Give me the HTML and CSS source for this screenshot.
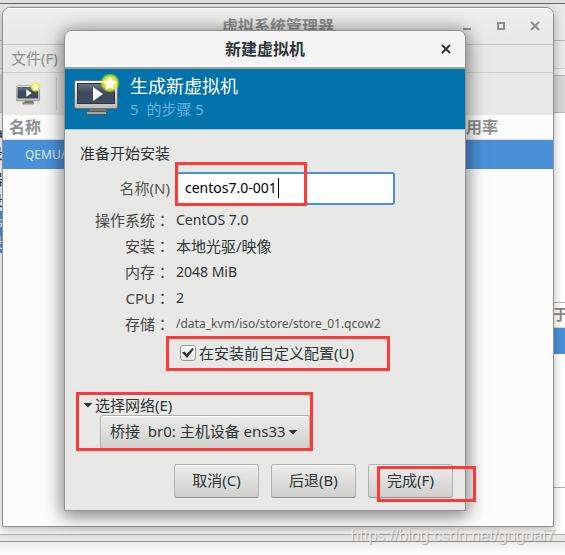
FILE: index.html
```html
<!DOCTYPE html>
<html lang="zh-CN">
  <head>
    <meta charset="UTF-8" />
    <title>新建虚拟机</title>
    <link rel="stylesheet" href="styles.css">
  </head>
  <body>
    <svg width="0" height="0" class="defs">
      <defs>
        <linearGradient id="screen" x1="0" y1="0" x2="0" y2="1">
          <stop offset="0" stop-color="#6b7785" />
          <stop offset="0.45" stop-color="#3d4a5b" />
          <stop offset="1" stop-color="#434f60" />
        </linearGradient>
        <linearGradient id="frame" x1="0" y1="0" x2="0" y2="1">
          <stop offset="0" stop-color="#f4f4f2" />
          <stop offset="1" stop-color="#bdbdb9" />
        </linearGradient>
        <radialGradient id="glow">
          <stop offset="0.5" stop-color="#eef02a" />
          <stop offset="0.75" stop-color="#e6ee20" stop-opacity="0.75" />
          <stop offset="1" stop-color="#e6ee20" stop-opacity="0" />
        </radialGradient>
        <symbol id="vm" viewBox="0 0 48 44">
          <path d="M17 34h14l2 4h-18z" fill="#777773" />
          <rect x="12.500" y="37.500" width="20" height="3" rx="1" fill="#a5a5a1" stroke="#555753" />
          <rect x="0.500" y="6.500" width="43" height="28" rx="2" fill="url(#frame)" stroke="#6f716e" />
          <rect x="3.500" y="9.500" width="37" height="20" fill="url(#screen)" stroke="#2c3642" />
          <path d="M19 13v14l10-7z" fill="#fff" />
          <circle cx="36" cy="9" r="10" fill="url(#glow)" />
          <path d="M36 2l2.200 4.600 5 .6-3.700 3.500 1 5-4.500-2.500-4.500 2.500 1-5-3.700-3.500 5-.6z" fill="#fff" />
        </symbol>
      </defs>
    </svg>

    <div class="desktop">
      <div class="backdrop">
        <div class="backdrop-title"></div>
        <div class="backdrop-menu"></div>
        <div class="backdrop-gap"></div>
        <div class="backdrop-tools"></div>
        <div class="backdrop-body">
          <div class="files">
            <span>a</span>
            <span>录</span>
            <span class="spaced">器</span>
            <span>录</span>
            <span class="selected">s</span>
            <span class="selected">录</span>
          </div>
          <div class="side">
            <div class="side-head">于</div>
            <div class="side-row"></div>
            <div class="side-rest"></div>
          </div>
        </div>
        <div class="backdrop-status"></div>
        <div class="backdrop-edge"></div>
      </div>

      <section class="window manager">
        <header class="titlebar">
          <h2>虚拟系统管理器</h2>
          <div class="controls">
            <button type="button" aria-label="最小化"><svg width="10" height="10"><path d="M1 8h8" /></svg></button>
            <button type="button" aria-label="最大化"><svg width="10" height="10"><path d="M2 2h6v6h-6z" /></svg></button>
            <button type="button" aria-label="关闭"><svg width="10" height="10"><path d="M1 1l8 8M9 1l-8 8" /></svg></button>
          </div>
        </header>
        <nav class="menubar"><button type="button">文件(F)</button></nav>
        <div class="toolbar">
          <button type="button" aria-label="新建虚拟机"><svg width="26" height="24"><use href="#vm" /></svg></button>
        </div>
        <table class="machines">
          <thead>
            <tr><th>名称</th><th class="usage">CPU 使用率</th></tr>
          </thead>
          <tbody>
            <tr><td>QEMU/KVM</td><td></td></tr>
          </tbody>
        </table>
      </section>

      <form class="window dialog">
        <header class="titlebar">
          <h1>新建虚拟机</h1>
          <div class="controls">
            <button type="button" aria-label="关闭"><svg width="10" height="10"><path d="M1 1l8 8M9 1l-8 8" /></svg></button>
          </div>
        </header>

        <div class="banner">
          <svg width="48" height="44"><use href="#vm" /></svg>
          <div>
            <h3>生成新虚拟机</h3>
            <p>5 &nbsp;的步骤 5</p>
          </div>
        </div>

        <div class="content">
          <p class="ready">准备开始安装</p>
          <div class="name-row">
            <label for="name">名称(N)</label>
            <div class="marked">
              <input type="text" id="name" value="centos7.0-001" />
              <i class="caret"></i>
              <i class="mark mark-name"></i>
            </div>
          </div>
          <dl class="summary">
            <dt>操作系统<span lang="zh-TW">：</span></dt><dd class="latin">CentOS 7.0</dd>
            <dt>安装<span lang="zh-TW">：</span></dt><dd>本地光驱/映像</dd>
            <dt>内存<span lang="zh-TW">：</span></dt><dd class="latin">2048 MiB</dd>
            <dt>CPU<span lang="zh-TW">：</span></dt><dd class="latin">2</dd>
            <dt>存储<span lang="zh-TW">：</span></dt><dd class="path">/data_kvm/iso/store/store_01.qcow2</dd>
          </dl>
          <div class="custom marked">
            <input type="checkbox" id="custom" checked />
            <label for="custom">在安装前自定义配置(U)</label>
            <i class="mark mark-custom"></i>
          </div>
          <div class="network marked">
            <button type="button" class="expander" aria-expanded="true">选择网络(E)</button>
            <div class="combo">
              <select aria-label="选择网络">
                <option>桥接 &nbsp;br0: 主机设备 ens33</option>
              </select>
            </div>
            <i class="mark mark-network"></i>
          </div>
        </div>

        <footer class="actions">
          <button type="button">取消(C)</button>
          <button type="button">后退(B)</button>
          <div class="marked">
            <button type="submit">完成(F)</button>
            <i class="mark mark-finish"></i>
          </div>
        </footer>
      </form>

      <div class="watermark">https://blog.csdn.net/guguai7</div>
    </div>
  </body>
</html>
```
FILE: styles.css
```css
* {
  box-sizing: border-box;
}
body {
  margin: 0;
  font-family: "Noto Sans", "Noto Sans CJK SC", sans-serif;
  font-size: 15px;
  color: #2e3436;
}
h1,
h2,
h3,
p,
dl,
dd {
  margin: 0;
}
button,
input,
select {
  font: inherit;
  color: inherit;
}
button {
  padding: 0;
  border: none;
  background: none;
}
.defs {
  position: absolute;
}
.desktop {
  position: relative;
  height: 100vh;
  min-height: 555px;
  overflow: hidden;
  background: #fff;
}

/* window at the back */
.backdrop {
  display: flex;
  flex-direction: column;
  height: 100%;
  border-top: 3px solid #e0e0e1;
}
.backdrop-title {
  height: 38px;
  background: #e8e8e6;
  border-top: 1px solid #666;
  border-bottom: 1px solid #b8b8b6;
}
.backdrop-menu {
  height: 28px;
  background: #e8e8e6;
  border-bottom: 1px solid #cfcfcd;
}
.backdrop-gap {
  height: 7px;
  background: #ededeb;
  border-bottom: 1px solid #b8b8b6;
}
.backdrop-tools {
  height: 37px;
  background: #d6d6d4;
  border-bottom: 1px solid #b8b8b6;
}
.backdrop-body {
  flex: 1;
  display: flex;
  justify-content: space-between;
}
.files {
  width: 3px;
  padding-top: 9px;
}
.files span {
  display: flex;
  justify-content: flex-end;
  height: 21px;
  overflow: hidden;
  line-height: 20px;
}
.files .spaced {
  margin-top: 5px;
}
.files .selected {
  background: #4a90d9;
  color: #fff;
}
.side {
  width: 12px;
  padding-top: 189px;
}
.side-head {
  display: flex;
  justify-content: flex-start;
  height: 26px;
  overflow: hidden;
  border-top: 1px solid #b0b0ae;
  border-bottom: 1px solid #ddd;
  color: #888a85;
  font-weight: bold;
  line-height: 23px;
}
.side-row {
  height: 26px;
  background: #4a90d9;
}
.side-rest {
  height: 134px;
  border-bottom: 1px solid #b0b0ae;
}
.backdrop-status {
  height: 8px;
  background: #e8e8e4;
  border-top: 1px solid #b4b4b0;
  border-bottom: 1px solid #999;
}
.backdrop-edge {
  height: 13px;
  background: linear-gradient(#ececec, #fff);
}

.window {
  position: absolute;
  border: 1px solid #919190;
  border-radius: 8px 8px 0 0;
  background: #e8e8e6;
}
.titlebar {
  display: grid;
  grid-template-columns: 1fr auto 1fr;
  align-items: center;
  height: 36px;
}
.titlebar h1,
.titlebar h2 {
  grid-column: 2;
  font-size: 16px;
  line-height: 24px;
}
.controls {
  display: flex;
  justify-content: flex-end;
  padding-right: 1px;
}
.controls button {
  display: flex;
  align-items: center;
  justify-content: center;
  width: 34px;
  height: 24px;
}
.controls path {
  fill: none;
  stroke: currentColor;
  stroke-width: 2;
}

/* manager window */
.manager {
  top: 7px;
  right: 11px;
  bottom: 28px;
  left: 2px;
  overflow: hidden;
  background: #fcfcfc;
  color: #8b8e8f;
  box-shadow: 0 3px 9px 1px rgba(0, 0, 0, 0.25);
}
.manager .titlebar {
  padding-bottom: 2px;
  background: linear-gradient(#eeeeec, #e8e8e6);
  border-top: 1px solid #fff;
}
.menubar {
  height: 29px;
  padding-left: 8px;
  border-top: 1px solid #c6c6c4;
  border-bottom: 1px solid #d0d0ce;
  background: #e8e8e6;
}
.menubar button {
  line-height: 26px;
}
.toolbar {
  display: flex;
  align-items: center;
  height: 42px;
  padding-left: 13px;
  background: #e8e8e6;
}
.toolbar button {
  display: flex;
  width: 41px;
  height: 34px;
  align-items: center;
  border-right: 1px solid #cfcfcd;
}
.machines {
  width: 100%;
  border-collapse: collapse;
}
.machines th {
  height: 24px;
  padding: 0 6px;
  border-bottom: 1px solid #ddd;
  font-size: 16px;
  line-height: 22px;
  text-align: left;
}
.machines .usage {
  padding-right: 55px;
  text-align: right;
}
.machines td {
  height: 30px;
  padding: 0 22px;
  background: #4a90d9;
  color: #dbe9f7;
  font-size: 12px;
}

/* new machine dialog */
.dialog {
  top: 30px;
  right: 99px;
  left: 64px;
  box-shadow: 0 3px 18px 2px rgba(0, 0, 0, 0.5);
}
.dialog .titlebar {
  height: 38px;
  padding-bottom: 1px;
  border-radius: 7px 7px 0 0;
  border-bottom: 2px solid #a3a39d;
  background: #f4f4f4;
}
.dialog .controls {
  padding-right: 2px;
}
.banner {
  display: flex;
  gap: 8px;
  height: 61px;
  padding: 5px 9px;
  border-bottom: 1px solid #a9c4d2;
  background: #0073aa;
  color: #fff;
}
.banner h3 {
  font-size: 18px;
  font-weight: normal;
  line-height: 24px;
}
.banner p {
  color: #66b3e3;
  line-height: 22px;
}
.content {
  padding: 10px 15px 0;
}
.ready {
  line-height: 26px;
}
.name-row {
  display: grid;
  grid-template-columns: 90px 1fr;
  gap: 6px;
  align-items: center;
  margin-top: 6px;
}
.name-row label {
  padding-bottom: 3px;
  color: #555;
  text-align: right;
}
.name-row input {
  display: block;
  width: 80%;
  height: 33px;
  padding: 0 7px 2px;
  border: 2px solid #4a90d9;
  border-radius: 3px;
  background: #fff;
  color: #000;
  font-size: 14px;
  outline: none;
}
.summary {
  display: grid;
  grid-template-columns: 90px 1fr;
  column-gap: 6px;
  margin-top: 2px;
  line-height: 26px;
}
.summary dt,
.summary dd {
  height: 26px;
}
.summary dt {
  color: #444;
  text-align: right;
}
.summary dt span {
  font-family: "Noto Sans CJK TC", sans-serif;
}
.summary .latin {
  font-size: 14px;
}
.summary .path {
  color: #555;
  font-size: 12px;
}
.custom {
  display: flex;
  align-items: center;
  gap: 3px;
  margin-top: 3px;
  padding-left: 100px;
  line-height: 26px;
}
.custom input {
  display: grid;
  place-items: center;
  width: 16px;
  height: 16px;
  margin: 0;
  appearance: none;
  border: 1px solid #999;
  border-radius: 3px;
  background: linear-gradient(#fff, #e0e0de);
}
.custom input:checked::before {
  content: "";
  width: 12px;
  height: 10px;
  background: #2e3436;
  clip-path: polygon(0 45%, 20% 35%, 40% 60%, 85% 0, 100% 10%, 42% 100%);
}
.network {
  margin-top: 29px;
}
.expander {
  display: flex;
  align-items: center;
  gap: 2px;
  padding-left: 3px;
  line-height: 20px;
}
.expander::before,
.combo::after {
  content: "";
  width: 10px;
  height: 5px;
  background: #2e3436;
  clip-path: polygon(0 0, 100% 0, 50% 100%);
}
.combo {
  display: grid;
  align-items: center;
  width: 210px;
  margin-left: 20px;
}
.combo::after {
  grid-area: 1 / 1;
  z-index: 1;
  justify-self: end;
  margin-right: 12px;
  pointer-events: none;
}
.combo select {
  grid-area: 1 / 1;
  width: 100%;
  height: 34px;
  padding: 0 9px 2px;
  appearance: none;
}
.combo select,
.actions button {
  border: 1px solid #b0b0ae;
  border-bottom-color: #929290;
  border-radius: 3px;
  background: linear-gradient(#ececea, #d0d0ce);
  box-shadow: inset 0 1px #fff;
}
.actions {
  display: flex;
  justify-content: flex-end;
  gap: 12px;
  padding: 15px 12px 12px;
}
.actions button {
  display: block;
  width: 85px;
  height: 34px;
  padding-bottom: 3px;
}

/* red annotation frames */
.marked {
  position: relative;
}
.mark {
  position: absolute;
  border: 3px solid #ff3838;
  pointer-events: none;
}
.mark-name {
  top: -10px;
  left: -1px;
  width: 132px;
  height: 44px;
}
.mark-custom {
  top: -4px;
  left: 86px;
  width: 224px;
  height: 35px;
}
.mark-network {
  top: -3px;
  left: -4px;
  width: 237px;
  height: 59px;
}
.mark-finish {
  top: 2px;
  left: 9px;
  width: 99px;
  height: 36px;
}
.caret {
  position: absolute;
  top: 6px;
  left: 102px;
  width: 1px;
  height: 20px;
  background: #000;
}
.watermark {
  position: absolute;
  right: 10px;
  bottom: 9px;
  color: rgba(235, 235, 235, 0.9);
  font-family: "Liberation Sans", sans-serif;
  font-size: 16px;
  line-height: 20px;
  text-shadow: 1px 1px 1px rgba(120, 120, 120, 0.6);
}
```
